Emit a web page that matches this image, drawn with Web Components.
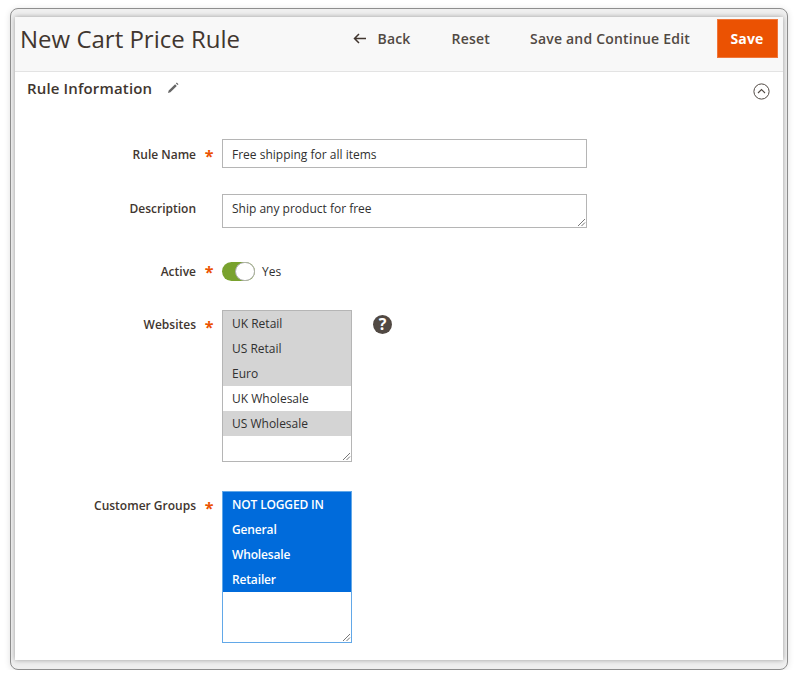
<!DOCTYPE html>
<html lang="en">
<head>
<meta charset="utf-8">
<title>New Cart Price Rule</title>
<style>
    html, body { margin: 0; background: #fff; }
    body { font-family: "Open Sans", "Liberation Sans", sans-serif; color: #303030; }
</style>
</head>
<body>
<window-frame>
    <page-bar title="New Cart Price Rule">
        <bar-action back>Back</bar-action>
        <bar-action>Reset</bar-action>
        <bar-action>Save and Continue Edit</bar-action>
        <bar-action primary>Save</bar-action>
    </page-bar>
    <rule-section heading="Rule Information">
        <form-row label="Rule Name" required gap="26" nudge>
            <text-box>Free shipping for all items</text-box>
        </form-row>
        <form-row label="Description" gap="34">
            <text-box multiline>Ship any product for free</text-box>
        </form-row>
        <form-row label="Active" required gap="29" center>
            <toggle-switch>Yes</toggle-switch>
        </form-row>
        <form-row label="Websites" required gap="29">
            <list-box help>
                <list-option selected>UK Retail</list-option>
                <list-option selected>US Retail</list-option>
                <list-option selected>Euro</list-option>
                <list-option>UK Wholesale</list-option>
                <list-option selected>US Wholesale</list-option>
            </list-box>
        </form-row>
        <form-row label="Customer Groups" required gap="0">
            <list-box focused>
                <list-option active>NOT LOGGED IN</list-option>
                <list-option active>General</list-option>
                <list-option active>Wholesale</list-option>
                <list-option active>Retailer</list-option>
            </list-box>
        </form-row>
    </rule-section>
</window-frame>

<script>
const GRIP = `<svg class="grip" width="9" height="9" viewBox="0 0 9 9"><path d="M1 8 8 1M4.5 8 8 4.5" stroke="#777" stroke-width="1" fill="none"/></svg>`;

class WindowFrame extends HTMLElement {
    constructor() {
        super();
        this.attachShadow({ mode: 'open' });
        this.shadowRoot.innerHTML = `
            <style>
                :host {
                    display: block;
                    box-sizing: border-box;
                    width: 778px;
                    height: 662px;
                    margin: 8px 0 0 10px;
                    padding: 8px 4px 9px;
                    border: 1px solid #8e8e8e;
                    border-radius: 8px;
                    background: #efefef;
                    box-shadow: 0 1px 6px rgba(0, 0, 0, .12);
                }
                .panel {
                    height: 100%;
                    background: #fff;
                    box-shadow: 0 0 5px rgba(0, 0, 0, .35);
                }
            </style>
            <div class="panel"><slot></slot></div>
        `;
    }
}

class PageBar extends HTMLElement {
    constructor() {
        super();
        this.attachShadow({ mode: 'open' });
        this.shadowRoot.innerHTML = `
            <style>
                :host {
                    display: flex;
                    align-items: center;
                    box-sizing: border-box;
                    height: 55px;
                    padding: 0 5px 11px 5px;
                    background: #f8f8f8;
                    border-bottom: 1px solid #e3e3e3;
                }
                h1 {
                    flex: 1;
                    margin: 0;
                    font-size: 24px;
                    font-weight: 400;
                    color: #41362f;
                }
                .actions { display: flex; align-items: center; gap: 40px; }
            </style>
            <h1>${this.getAttribute('title')}</h1>
            <div class="actions"><slot></slot></div>
        `;
    }
}

class BarAction extends HTMLElement {
    constructor() {
        super();
        this.attachShadow({ mode: 'open' });
        const back = this.hasAttribute('back') ? `<svg width="13" height="11" viewBox="0 0 13 11"><path d="M13 5.5H2M6 1 1.5 5.5 6 10" fill="none" stroke="#41362f" stroke-width="1.5"/></svg>` : '';
        this.shadowRoot.innerHTML = `
            <style>
                :host {
                    display: inline-flex;
                    align-items: center;
                    gap: 11px;
                    font-size: 14px;
                    font-weight: 600;
                    color: #514943;
                    letter-spacing: .2px;
                }
                :host([back]) { margin-right: 1px; }
                :host([primary]) {
                    justify-content: center;
                    box-sizing: border-box;
                    width: 61px;
                    height: 39px;
                    margin-left: -13px;
                    padding-right: 1px;
                    background: #eb5202;
                    border: 1px solid #f0763a;
                    color: #fff;
                    font-weight: 700;
                }
            </style>
            ${back}<slot></slot>
        `;
    }
}

class RuleSection extends HTMLElement {
    constructor() {
        super();
        this.attachShadow({ mode: 'open' });
        this.shadowRoot.innerHTML = `
            <style>
                :host { display: block; position: relative; padding: 5px 0 0; }
                .head {
                    display: flex;
                    align-items: center;
                    gap: 15px;
                    height: 21px;
                    padding-left: 12px;
                    font-size: 15px;
                    font-weight: 600;
                    color: #41362f;
                    letter-spacing: .15px;
                }
                .collapse { position: absolute; top: 11px; right: 13px; }
                .rows { padding-top: 41px; }
            </style>
            <div class="head">
                <span>${this.getAttribute('heading')}</span>
                <svg width="13" height="13" viewBox="0 0 13 13"><path d="M1 12l.7-2.4 6.4-6.4 1.7 1.7L3.4 11.3zM8.9 2.4l.9-.9 1.7 1.7-.9.9z" fill="#666"/></svg>
            </div>
            <svg class="collapse" width="17" height="17" viewBox="0 0 17 17"><circle cx="8.5" cy="8.5" r="7.6" fill="none" stroke="#514943" stroke-width="1"/><path d="M5 10l3.5-3.5L12 10" fill="none" stroke="#514943" stroke-width="1.1"/></svg>
            <div class="rows"><slot></slot></div>
        `;
    }
}

class FormRow extends HTMLElement {
    constructor() {
        super();
        this.attachShadow({ mode: 'open' });
        const star = this.hasAttribute('required') ? '*' : '';
        this.shadowRoot.innerHTML = `
            <style>
                :host {
                    display: grid;
                    grid-template-columns: 181px 26px 1fr;
                    align-items: start;
                    margin-bottom: ${this.getAttribute('gap')}px;
                }
                :host([center]) { align-items: center; height: 19px; }
                .label {
                    text-align: right;
                    font-size: 12px;
                    font-weight: 600;
                    line-height: 18px;
                    padding-top: 6px;
                    color: #41362f;
                }
                :host([nudge]) .label { padding-top: 7px; }
                .star {
                    text-align: center;
                    color: #eb5202;
                    font-size: 16px;
                    font-weight: 700;
                    line-height: 18px;
                    padding-top: 8px;
                }
                :host([center]) .label { padding-top: 0; }
                :host([center]) .star { padding-top: 1px; line-height: 18px; }
            </style>
            <div class="label">${this.getAttribute('label')}</div>
            <div class="star">${star}</div>
            <div><slot></slot></div>
        `;
    }
}

class TextBox extends HTMLElement {
    constructor() {
        super();
        this.attachShadow({ mode: 'open' });
        this.shadowRoot.innerHTML = `
            <style>
                :host {
                    display: block;
                    position: relative;
                    box-sizing: border-box;
                    width: 365px;
                    height: 29px;
                    padding: 6px 9px 0;
                    border: 1px solid #b5b5b5;
                    font-size: 12px;
                    line-height: 18px;
                    color: #303030;
                }
                :host([multiline]) { height: 34px; padding-top: 5px; }
                .grip { display: none; position: absolute; right: 0; bottom: 0; }
                :host([multiline]) .grip { display: block; }
            </style>
            <slot></slot>${GRIP}
        `;
    }
}

class ToggleSwitch extends HTMLElement {
    constructor() {
        super();
        this.attachShadow({ mode: 'open' });
        this.shadowRoot.innerHTML = `
            <style>
                :host {
                    display: flex;
                    align-items: center;
                    gap: 7px;
                    font-size: 12px;
                    color: #303030;
                }
                .track {
                    display: flex;
                    justify-content: flex-end;
                    box-sizing: border-box;
                    width: 33px;
                    height: 19px;
                    border-radius: 10px;
                    background: #79a22e;
                }
                .knob {
                    box-sizing: border-box;
                    width: 20px;
                    height: 19px;
                    border-radius: 10px;
                    background: #fff;
                    border: 1px solid #adadad;
                }
            </style>
            <div class="track"><div class="knob"></div></div>
            <span><slot></slot></span>
        `;
    }
}

class ListBox extends HTMLElement {
    constructor() {
        super();
        this.attachShadow({ mode: 'open' });
        const help = this.hasAttribute('help') ? `<div class="help">?</div>` : '';
        this.shadowRoot.innerHTML = `
            <style>
                :host { display: flex; align-items: flex-start; gap: 21px; }
                .box {
                    position: relative;
                    box-sizing: border-box;
                    width: 130px;
                    height: 152px;
                    border: 1px solid #b5b5b5;
                    background: #fff;
                }
                :host([focused]) .box { border-color: #62a8e8; }
                .grip { position: absolute; right: 0; bottom: 0; }
                .help {
                    width: 19px;
                    height: 19px;
                    margin-top: 5px;
                    border-radius: 50%;
                    background: #514943;
                    color: #fff;
                    font-size: 16px;
                    font-weight: 700;
                    line-height: 19px;
                    text-align: center;
                }
            </style>
            <div class="box"><slot></slot>${GRIP}</div>
            ${help}
        `;
    }
}

class ListOption extends HTMLElement {
    constructor() {
        super();
        this.attachShadow({ mode: 'open' });
        this.shadowRoot.innerHTML = `
            <style>
                :host {
                    display: block;
                    box-sizing: border-box;
                    height: 25px;
                    padding-left: 9px;
                    font-size: 12px;
                    line-height: 25px;
                    color: #303030;
                }
                :host([selected]) { background: #d4d4d4; }
                :host([active]) { background: #006bdb; color: #fff; font-weight: 600; letter-spacing: -.15px; }
            </style>
            <slot></slot>
        `;
    }
}

customElements.define('window-frame', WindowFrame);
customElements.define('page-bar', PageBar);
customElements.define('bar-action', BarAction);
customElements.define('rule-section', RuleSection);
customElements.define('form-row', FormRow);
customElements.define('text-box', TextBox);
customElements.define('toggle-switch', ToggleSwitch);
customElements.define('list-box', ListBox);
customElements.define('list-option', ListOption);
</script>
</body>
</html>
